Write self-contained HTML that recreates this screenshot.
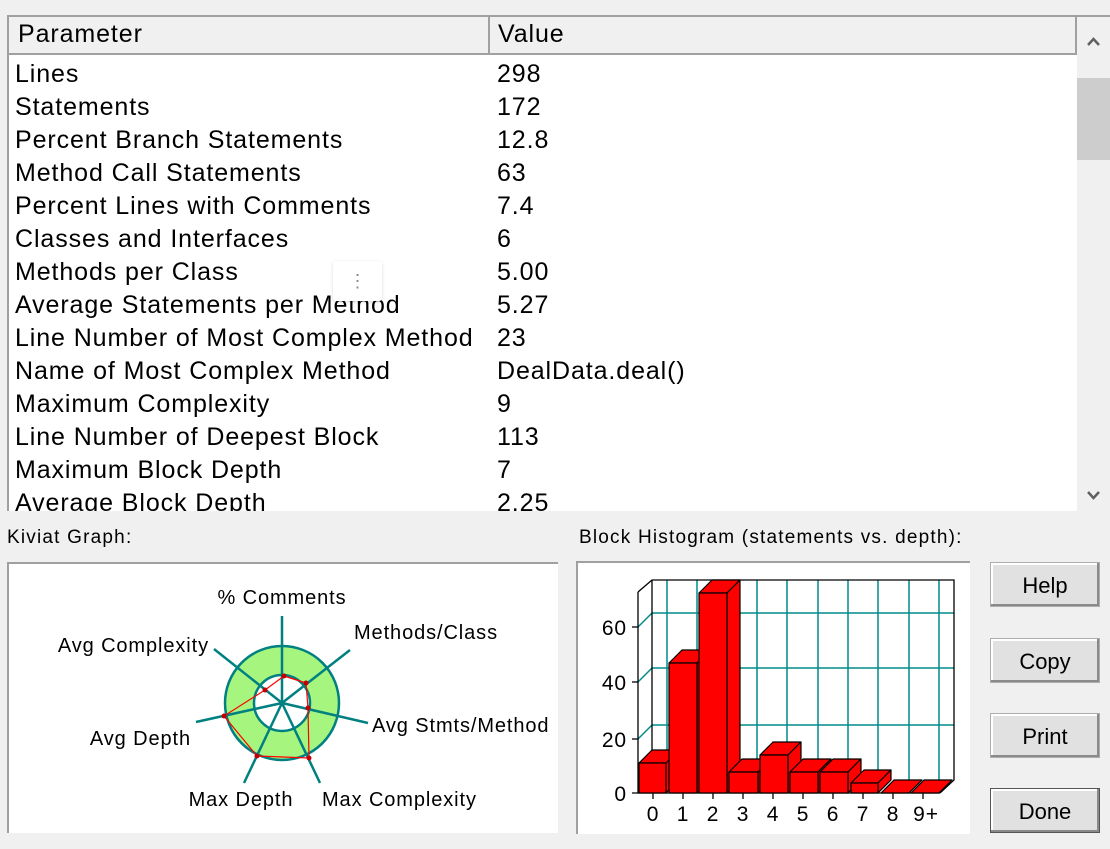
<!DOCTYPE html>
<html><head><style>
body{margin:0;width:1110px;height:849px;background:#f0f0f0;font-family:"Liberation Sans",Arial,sans-serif;position:relative;overflow:hidden}
.tbl{position:absolute;left:7px;top:15px;width:1103px;height:496px;background:#fff;border-top:2px solid #a0a0a0;border-left:2px solid #a0a0a0;overflow:hidden;box-sizing:border-box}
.hdr{position:absolute;left:0;top:0;height:38px;width:1068px;background:#f0f0f0;border-bottom:2px solid #a0a0a0;box-sizing:border-box}
.hdr div{position:absolute;top:3px;font-size:25px;color:#000;letter-spacing:0.9px}
.row{position:absolute;left:6px;font-size:25px;color:#000;white-space:nowrap;letter-spacing:0.9px}
.val{position:absolute;left:488px;font-size:25px;white-space:nowrap;letter-spacing:0.9px}
.sb{position:absolute;left:1068px;top:0;width:33px;height:496px;background:#f0f0f0}
.lbl{position:absolute;font-size:19px;color:#000;letter-spacing:1.2px}
.btn{position:absolute;left:990px;width:110px;height:45px;background:#e1e1e1;border:1px solid #adadad;box-shadow:inset -2px -2px 0 #8a8a8a,inset 2px 2px 0 #fff;font-size:22px;text-align:center;line-height:45px;box-sizing:border-box}
svg text{letter-spacing:0.9px}
</style></head><body>
<div class="tbl">
 <div class="hdr"><div style="left:9px">Parameter</div><div style="left:479px;top:0;height:36px;border-left:2px solid #a0a0a0;"></div><div style="left:489px">Value</div><div style="left:1066px;top:0;height:36px;border-left:2px solid #a0a0a0"></div></div>
 <div class="row" style="top:43px">Lines</div><div class="val" style="top:43px">298</div>
 <div class="row" style="top:76px">Statements</div><div class="val" style="top:76px">172</div>
 <div class="row" style="top:109px">Percent Branch Statements</div><div class="val" style="top:109px">12.8</div>
 <div class="row" style="top:142px">Method Call Statements</div><div class="val" style="top:142px">63</div>
 <div class="row" style="top:175px">Percent Lines with Comments</div><div class="val" style="top:175px">7.4</div>
 <div class="row" style="top:208px">Classes and Interfaces</div><div class="val" style="top:208px">6</div>
 <div class="row" style="top:241px">Methods per Class</div><div class="val" style="top:241px">5.00</div>
 <div class="row" style="top:274px">Average Statements per Method</div><div class="val" style="top:274px">5.27</div>
 <div class="row" style="top:307px">Line Number of Most Complex Method</div><div class="val" style="top:307px">23</div>
 <div class="row" style="top:340px">Name of Most Complex Method</div><div class="val" style="top:340px">DealData.deal()</div>
 <div class="row" style="top:373px">Maximum Complexity</div><div class="val" style="top:373px">9</div>
 <div class="row" style="top:406px">Line Number of Deepest Block</div><div class="val" style="top:406px">113</div>
 <div class="row" style="top:439px">Maximum Block Depth</div><div class="val" style="top:439px">7</div>
 <div class="row" style="top:472px">Average Block Depth</div><div class="val" style="top:472px">2.25</div>
 <div class="sb">
  <svg width="33" height="496" style="position:absolute;left:0;top:0"><path d="M11 28 L16.5 22 L22 28" fill="none" stroke="#606060" stroke-width="2.5"/><rect x="0" y="61" width="33" height="82" fill="#cdcdcd"/><path d="M11 475 L16.5 481 L22 475" fill="none" stroke="#606060" stroke-width="2.5"/></svg>
 </div>
</div>
<div style="position:absolute;left:333px;top:261px;width:49px;height:40px;background:#fff;border-radius:3px;box-shadow:0 1px 3px rgba(0,0,0,.15);color:#888;font-size:18px;text-align:center;line-height:40px">⋮</div>

<div class="lbl" style="left:7px;top:527px">Kiviat Graph:</div>
<div class="lbl" style="left:579px;top:527px">Block Histogram (statements vs. depth):</div>

<div style="position:absolute;left:7px;top:562px;width:551px;height:271px;background:#fff;border-top:2px solid #a0a0a0;border-left:2px solid #a0a0a0;box-sizing:border-box"></div>
<svg width="560" height="849" style="position:absolute;left:0;top:0" font-family="Liberation Sans,Arial,sans-serif" font-size="20">
 <circle cx="282" cy="703" r="42.5" fill="none" stroke="#a6f57f" stroke-width="29"/>
 <circle cx="282" cy="703" r="57" fill="none" stroke="#008080" stroke-width="2.5"/>
 <circle cx="282" cy="703" r="28" fill="none" stroke="#008080" stroke-width="2.5"/>
 <g stroke="#008080" stroke-width="2.5">
  <line x1="282" y1="703" x2="282" y2="616"/><line x1="282" y1="703" x2="350" y2="650"/><line x1="282" y1="703" x2="368" y2="723"/><line x1="282" y1="703" x2="320" y2="783"/><line x1="282" y1="703" x2="244" y2="783"/><line x1="282" y1="703" x2="196" y2="722"/><line x1="282" y1="703" x2="214" y2="649"/>
 </g>
 <polygon points="284,676 306,683 308,708 309,758 257,756 224,716 265,690" fill="none" stroke="#ff0000" stroke-width="1.2"/>
 <g fill="#c00000"><circle cx="284" cy="676" r="2.5"/><circle cx="306" cy="683" r="2.5"/><circle cx="308" cy="708" r="2.5"/><circle cx="309" cy="758" r="2.5"/><circle cx="257" cy="756" r="2.5"/><circle cx="224" cy="716" r="2.5"/><circle cx="265" cy="690" r="2.5"/></g>
 <text x="282" y="604" text-anchor="middle">% Comments</text>
 <text x="354" y="639">Methods/Class</text>
 <text x="209" y="652" text-anchor="end">Avg Complexity</text>
 <text x="372" y="732">Avg Stmts/Method</text>
 <text x="191" y="745" text-anchor="end">Avg Depth</text>
 <text x="241" y="806" text-anchor="middle">Max Depth</text>
 <text x="322" y="806">Max Complexity</text>
</svg>

<div style="position:absolute;left:576px;top:561px;width:394px;height:273px;background:#fff;border-top:2px solid #a0a0a0;border-left:2px solid #a0a0a0;box-sizing:border-box"></div>
<svg width="1110" height="849" style="position:absolute;left:0;top:0" font-family="Liberation Sans,Arial,sans-serif" font-size="21">
 <g stroke="#008b8b" stroke-width="1.5">
  <line x1="667" y1="580" x2="667" y2="780"/><line x1="697" y1="580" x2="697" y2="780"/><line x1="727" y1="580" x2="727" y2="780"/><line x1="757" y1="580" x2="757" y2="780"/><line x1="787" y1="580" x2="787" y2="780"/><line x1="818" y1="580" x2="818" y2="780"/><line x1="848" y1="580" x2="848" y2="780"/><line x1="878" y1="580" x2="878" y2="780"/><line x1="909" y1="580" x2="909" y2="780"/><line x1="939" y1="580" x2="939" y2="780"/>
  <line x1="652" y1="613" x2="954" y2="613"/><line x1="652" y1="668" x2="954" y2="668"/><line x1="652" y1="725" x2="954" y2="725"/>
  <line x1="638" y1="627" x2="652" y2="613"/><line x1="638" y1="682" x2="652" y2="668"/><line x1="638" y1="739" x2="652" y2="725"/>
 </g>
 <g stroke="#000" stroke-width="1.3" fill="none">
  <polyline points="638,592 652,580 954,580 954,780 940,793"/>
  <line x1="652" y1="580" x2="652" y2="780"/>
  <line x1="638" y1="592" x2="638" y2="793"/>
  <line x1="632" y1="793" x2="940" y2="793"/>
  <line x1="632" y1="627" x2="638" y2="627"/><line x1="632" y1="682" x2="638" y2="682"/><line x1="632" y1="739" x2="638" y2="739"/>
 </g>
 <g fill="#ff0000" stroke="#000" stroke-width="1.2" stroke-linejoin="round">
  <path d="M639 763 L652 750 L679 750 L666 763Z"/><path d="M666 763 L679 750 L679 780 L666 793Z"/><rect x="639" y="763" width="27" height="30"/>
  <path d="M669 663 L682 650 L710 650 L697 663Z"/><path d="M697 663 L710 650 L710 780 L697 793Z"/><rect x="669" y="663" width="28" height="130"/>
  <path d="M699 593 L712 580 L740 580 L727 593Z"/><path d="M727 593 L740 580 L740 780 L727 793Z"/><rect x="699" y="593" width="28" height="200"/>
  <path d="M729 772 L742 759 L771 759 L758 772Z"/><path d="M758 772 L771 759 L771 780 L758 793Z"/><rect x="729" y="772" width="29" height="21"/>
  <path d="M760 755 L773 742 L801 742 L788 755Z"/><path d="M788 755 L801 742 L801 780 L788 793Z"/><rect x="760" y="755" width="28" height="38"/>
  <path d="M790 772 L803 759 L831 759 L818 772Z"/><path d="M818 772 L831 759 L831 780 L818 793Z"/><rect x="790" y="772" width="28" height="21"/>
  <path d="M820 772 L833 759 L861 759 L848 772Z"/><path d="M848 772 L861 759 L861 780 L848 793Z"/><rect x="820" y="772" width="28" height="21"/>
  <path d="M851 783 L864 770 L891 770 L878 783Z"/><path d="M878 783 L891 770 L891 780 L878 793Z"/><rect x="851" y="783" width="27" height="10"/>
  <path d="M881 793 L894 780 L922 780 L909 793Z"/>
  <path d="M911 793 L924 780 L952 780 L939 793Z"/>
 </g>
 <g stroke="#000" stroke-width="1.3"><line x1="653" y1="793" x2="653" y2="799"/><line x1="683" y1="793" x2="683" y2="799"/><line x1="713" y1="793" x2="713" y2="799"/><line x1="743" y1="793" x2="743" y2="799"/><line x1="773" y1="793" x2="773" y2="799"/><line x1="803" y1="793" x2="803" y2="799"/><line x1="833" y1="793" x2="833" y2="799"/><line x1="863" y1="793" x2="863" y2="799"/><line x1="893" y1="793" x2="893" y2="799"/><line x1="923" y1="793" x2="923" y2="799"/></g>
 <g text-anchor="end"><text x="627" y="635">60</text><text x="627" y="690">40</text><text x="627" y="747">20</text><text x="627" y="801">0</text></g>
 <g text-anchor="middle"><text x="653" y="821">0</text><text x="683" y="821">1</text><text x="713" y="821">2</text><text x="743" y="821">3</text><text x="773" y="821">4</text><text x="803" y="821">5</text><text x="833" y="821">6</text><text x="863" y="821">7</text><text x="893" y="821">8</text><text x="926" y="821">9+</text></g>
</svg>

<div class="btn" style="top:562px">Help</div>
<div class="btn" style="top:638px">Copy</div>
<div class="btn" style="top:713px">Print</div>
<div class="btn" style="top:788px;border:1px solid #555">Done</div>
</body></html>
